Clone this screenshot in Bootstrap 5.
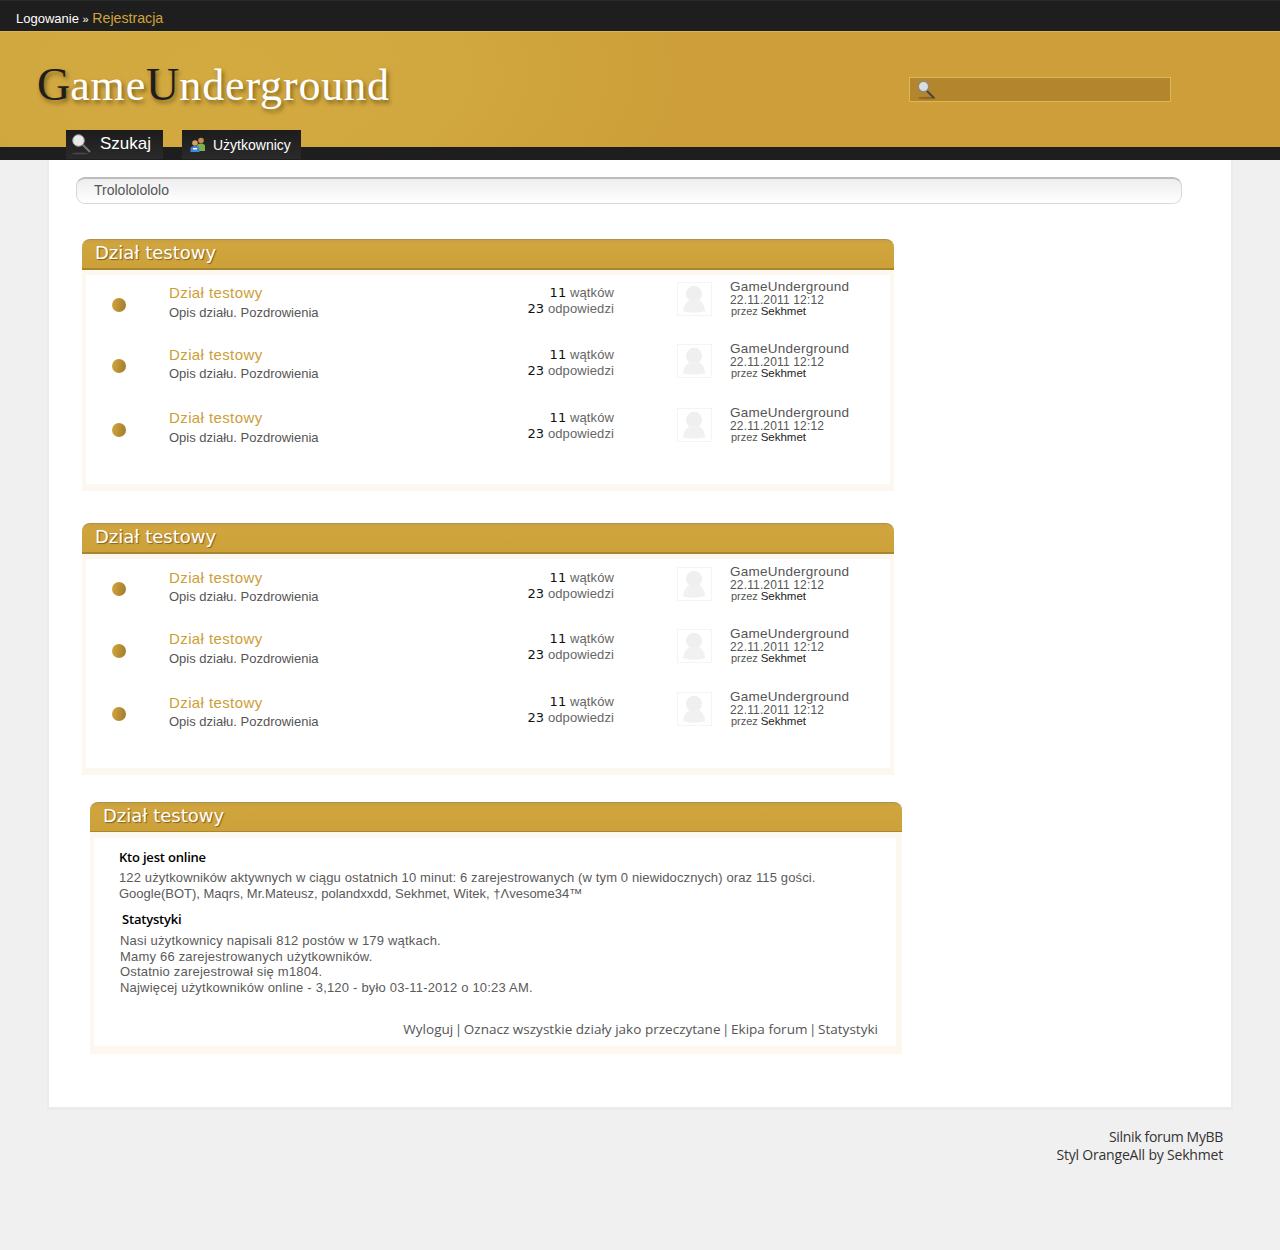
<!DOCTYPE html>
<html lang="pl">
<head>
<meta charset="utf-8">
<title>GameUnderground</title>
<link rel="stylesheet" href="https://cdn.jsdelivr.net/npm/bootstrap@5.3.0/dist/css/bootstrap.min.css">
<style>
html,body{background:#f0f0f0;}
body{font-family:"Liberation Sans",Arial,sans-serif;font-size:13px;color:#555;height:1250px;overflow:hidden;}
a{text-decoration:none;color:inherit;}
.gu-top{height:31px;background:#1e1e1e;border-top:1px solid #2a2a2a;padding:9px 0 0 16px;color:#fff;font-size:13px;line-height:17px;}
.gu-top small{font-size:11px;}
.gu-top a.gu-reg{color:#d0a33c;font-size:14.2px;}
.gu-head{height:116px;background:radial-gradient(ellipse 480px 240px at 220px 40px,#d3aa40 0%,#d1a73f 50%,#cd9e39 100%);background-color:#cc9d38;border-top:1px solid #d9b654;position:relative;}
.gu-logo{font-family:"Liberation Serif",serif;font-size:44px;line-height:52px;color:#fff;padding:27px 0 0 37px;text-shadow:2px 3px 4px rgba(60,40,0,.55);letter-spacing:.85px;}
.gu-logo b{font-weight:400;font-size:46px;letter-spacing:0;color:#1e1e1e;}
.gu-search{position:absolute;left:909px;top:45px;width:262px;height:25px;background:#b3862e;border:1px solid #dcb94c;display:flex;align-items:center;padding-left:7px;}
.gu-band{height:13px;background:#1e1e1e;position:relative;}
.gu-tabs{position:absolute;left:66px;top:-17px;display:flex;gap:19px;}
.gu-tab{height:29px;background:linear-gradient(#1c1c1c,#2a2a2a);color:#fff;display:flex;align-items:center;}
.gu-tab-a{width:97px;font-size:17px;padding-left:6px;gap:9px;padding-bottom:1px;}
.gu-tab-b{width:119px;font-size:14px;padding-left:8px;gap:7px;padding-top:1px;}
.gu-page{width:1186px;height:950px;margin-left:47px;background:#fff;border:solid #ebebeb;border-width:0 2px 3px 2px;padding:17px 0 0 27px;}
.gu-crumb{width:1106px;height:27px;border:1px solid #d8d8d8;border-top:2px solid #bdbdbd;border-radius:9px;background:linear-gradient(#eee,#fff);font-size:14px;line-height:23px;padding-left:17px;color:#555;margin-bottom:35px;}
.gu-cat{width:812px;margin-left:6px;margin-bottom:32px;}
.gu-cat-c{margin-left:14px;margin-bottom:0;margin-top:-5px;}
.gu-cat-h{height:31px;background:linear-gradient(#c9a042,#d0a53e 15%,#cda13a);border-top:1px solid #ae914f;border-bottom:2px solid #ab8430;border-radius:8px 8px 0 0;color:#fff;font-family:"DejaVu Sans",sans-serif;font-size:18px;line-height:26px;padding-left:13px;text-shadow:1px 1px 1px rgba(80,50,0,.6);}
.gu-cat-c .gu-cat-h{height:30px;border-bottom-width:1px;}
.gu-cat-b{height:221px;border:solid #fdf8ef;border-width:5px 4px 7px 4px;background:#fff;}
.gu-row{display:flex;height:62px;}
.gu-row:nth-child(2){height:63px;}
.gu-dot{width:14px;height:14px;border-radius:50%;background:linear-gradient(100deg,#d3a73f,#a17a2b);margin:23px 43px 0 26px;flex:none;}
.gu-name{width:300px;flex:none;padding-top:9px;}
.gu-name a{display:block;color:#cc9e38;font-size:15px;line-height:18px;letter-spacing:.4px;}
.gu-name p{margin:2px 0 0;line-height:18px;color:#555;}
.gu-stats{width:145px;flex:none;text-align:right;padding-top:10px;line-height:16px;color:#666;letter-spacing:.1px;}
.gu-stats b{font-weight:400;color:#111;font-family:"DejaVu Sans",sans-serif;font-size:13px;}
.gu-ava{width:35px;height:34px;flex:none;margin:7px 18px 0 63px;border:1px solid #f4f4f4;display:block;}
.gu-last{padding-top:4px;line-height:12px;font-size:12px;color:#555;}
.gu-last a{display:block;font-size:13.5px;line-height:15px;letter-spacing:.25px;}
.gu-last span{display:block;letter-spacing:.15px;}
.gu-last small{display:block;font-size:11px;padding-left:1px;line-height:11px;letter-spacing:-.05px;margin-top:-2px;}
.gu-last small a{display:inline;color:#222;font-size:11.5px;letter-spacing:0;}
.gu-a .gu-row:nth-child(2) .gu-dot{margin-top:22px;}
.gu-a .gu-row:nth-child(2) .gu-name p{margin-top:1px;}
.gu-a .gu-row:nth-child(3) .gu-ava{margin-top:8px;}
.gu-a .gu-row:nth-child(3) .gu-last{padding-top:5px;}
.gu-z .gu-ava{margin-top:8px;}
.gu-z .gu-last{padding-top:5px;}
.gu-z .gu-row:nth-child(odd) .gu-name{padding-top:10px;}
.gu-z .gu-row:nth-child(odd) .gu-name p{margin-top:1px;}
.gu-z .gu-row:nth-child(1) .gu-stats{padding-top:11px;}
.gu-info{height:222px;padding:10px 0 0 25px;border-width:6px 6px 8px 4px;font-size:13px;line-height:16px;color:#5a5a5a;}
.gu-info h6{font-family:"Open Sans",sans-serif;font-size:13px;font-weight:600;color:#000;margin:0 0 4px;line-height:18px;letter-spacing:-.2px;}
.gu-info h6.gu-h2{margin:8px 0 5px 3px;}
.gu-info p{margin:0;}
.gu-info p.gu-p2{line-height:15.6px;letter-spacing:.2px;margin-left:1px;}
.gu-w1{letter-spacing:.13px;}
.gu-links{font-family:"Open Sans",sans-serif;font-size:13.5px;color:#555;text-align:right;padding-right:18px;line-height:18px;margin-top:25px;letter-spacing:.02px;}
.gu-sep{margin:0 -2px;}
.gu-foot{width:1223px;text-align:right;font-family:"Open Sans",sans-serif;font-size:14px;line-height:18px;color:#333;padding-top:18px;letter-spacing:-.19px;}
.gu-foot span{letter-spacing:-.33px;}
</style>
</head>
<body>
<div class="gu-top"><a href="#">Logowanie</a> <small>»</small> <a href="#" class="gu-reg">Rejestracja</a></div>
<header class="gu-head">
  <div class="gu-logo"><b>G</b>ame<b>U</b>nderground</div>
  <div class="gu-search">
    <svg width="20" height="20" viewBox="0 0 20 20"><ellipse cx="10" cy="18" rx="9" ry="1.3" fill="#8e6a22"/><path d="M8 9l9 9" stroke="#444" stroke-width="2"/><circle cx="6.5" cy="6.5" r="5.2" fill="#dcdcdc" stroke="#8a8a78" stroke-width="1.4"/></svg>
  </div>
</header>
<nav class="gu-band">
  <div class="gu-tabs">
    <a href="#" class="gu-tab gu-tab-a"><svg width="19" height="21" viewBox="0 0 19 21"><ellipse cx="8" cy="19.5" rx="8" ry="1" fill="#444"/><path d="M10 10l8 8" stroke="#777" stroke-width="2"/><circle cx="6.5" cy="6.5" r="5.8" fill="#e8e8e8" stroke="#999" stroke-width="1"/></svg><span>Szukaj</span></a>
    <a href="#" class="gu-tab gu-tab-b"><svg width="16" height="16" viewBox="0 0 16 16"><circle cx="11" cy="3.5" r="2.8" fill="#c98c4a"/><path d="M7 14V9q0-2.500 4-2.500t4 2.500v5z" fill="#7fae4b"/><circle cx="5" cy="6" r="2.800" fill="#d9a066"/><path d="M.5 15v-3.500q0-2.500 4.500-2.500t4.500 2.500V15z" fill="#3f86d6"/><rect x="3" y="11" width="4" height="1.500" fill="#fff"/></svg><span>Użytkownicy</span></a>
  </div>
</nav>
<main class="gu-page">
  <div class="gu-crumb">Trolololololo</div>

  <section class="gu-cat gu-a">
    <div class="gu-cat-h">Dział testowy</div>
    <div class="gu-cat-b">
      <div class="gu-row"><i class="gu-dot"></i><div class="gu-name"><a href="#">Dział testowy</a><p>Opis działu. Pozdrowienia</p></div><div class="gu-stats"><b>11</b> wątków<br><b>23</b> odpowiedzi</div><svg class="gu-ava" viewBox="0 0 35 34"><circle cx="17" cy="11.500" r="8.500" fill="#efefef"/><path d="M5 30q2-12 12-13t12 13q-12 3-24 0z" fill="#f1f1f1"/></svg><div class="gu-last"><a href="#">GameUnderground</a><span>22.11.2011 12:12</span><small>przez <a href="#">Sekhmet</a></small></div></div>
      <div class="gu-row"><i class="gu-dot"></i><div class="gu-name"><a href="#">Dział testowy</a><p>Opis działu. Pozdrowienia</p></div><div class="gu-stats"><b>11</b> wątków<br><b>23</b> odpowiedzi</div><svg class="gu-ava" viewBox="0 0 35 34"><circle cx="17" cy="11.500" r="8.500" fill="#efefef"/><path d="M5 30q2-12 12-13t12 13q-12 3-24 0z" fill="#f1f1f1"/></svg><div class="gu-last"><a href="#">GameUnderground</a><span>22.11.2011 12:12</span><small>przez <a href="#">Sekhmet</a></small></div></div>
      <div class="gu-row"><i class="gu-dot"></i><div class="gu-name"><a href="#">Dział testowy</a><p>Opis działu. Pozdrowienia</p></div><div class="gu-stats"><b>11</b> wątków<br><b>23</b> odpowiedzi</div><svg class="gu-ava" viewBox="0 0 35 34"><circle cx="17" cy="11.500" r="8.500" fill="#efefef"/><path d="M5 30q2-12 12-13t12 13q-12 3-24 0z" fill="#f1f1f1"/></svg><div class="gu-last"><a href="#">GameUnderground</a><span>22.11.2011 12:12</span><small>przez <a href="#">Sekhmet</a></small></div></div>
    </div>
  </section>

  <section class="gu-cat gu-z">
    <div class="gu-cat-h">Dział testowy</div>
    <div class="gu-cat-b">
      <div class="gu-row"><i class="gu-dot"></i><div class="gu-name"><a href="#">Dział testowy</a><p>Opis działu. Pozdrowienia</p></div><div class="gu-stats"><b>11</b> wątków<br><b>23</b> odpowiedzi</div><svg class="gu-ava" viewBox="0 0 35 34"><circle cx="17" cy="11.500" r="8.500" fill="#efefef"/><path d="M5 30q2-12 12-13t12 13q-12 3-24 0z" fill="#f1f1f1"/></svg><div class="gu-last"><a href="#">GameUnderground</a><span>22.11.2011 12:12</span><small>przez <a href="#">Sekhmet</a></small></div></div>
      <div class="gu-row"><i class="gu-dot"></i><div class="gu-name"><a href="#">Dział testowy</a><p>Opis działu. Pozdrowienia</p></div><div class="gu-stats"><b>11</b> wątków<br><b>23</b> odpowiedzi</div><svg class="gu-ava" viewBox="0 0 35 34"><circle cx="17" cy="11.500" r="8.500" fill="#efefef"/><path d="M5 30q2-12 12-13t12 13q-12 3-24 0z" fill="#f1f1f1"/></svg><div class="gu-last"><a href="#">GameUnderground</a><span>22.11.2011 12:12</span><small>przez <a href="#">Sekhmet</a></small></div></div>
      <div class="gu-row"><i class="gu-dot"></i><div class="gu-name"><a href="#">Dział testowy</a><p>Opis działu. Pozdrowienia</p></div><div class="gu-stats"><b>11</b> wątków<br><b>23</b> odpowiedzi</div><svg class="gu-ava" viewBox="0 0 35 34"><circle cx="17" cy="11.500" r="8.500" fill="#efefef"/><path d="M5 30q2-12 12-13t12 13q-12 3-24 0z" fill="#f1f1f1"/></svg><div class="gu-last"><a href="#">GameUnderground</a><span>22.11.2011 12:12</span><small>przez <a href="#">Sekhmet</a></small></div></div>
    </div>
  </section>

  <section class="gu-cat gu-cat-c">
    <div class="gu-cat-h">Dział testowy</div>
    <div class="gu-cat-b gu-info">
      <h6>Kto jest online</h6>
      <p><span class="gu-w1">122 użytkowników aktywnych w ciągu ostatnich 10 minut: 6 zarejestrowanych (w tym 0 niewidocznych) oraz 115 gości.</span><br>Google(BOT), Maqrs, Mr.Mateusz, polandxxdd, Sekhmet, Witek, †Λvesome34™</p>
      <h6 class="gu-h2">Statystyki</h6>
      <p class="gu-p2">Nasi użytkownicy napisali 812 postów w 179 wątkach.<br>Mamy 66 zarejestrowanych użytkowników.<br>Ostatnio zarejestrował się m1804.<br>Najwięcej użytkowników online - 3,120 - było 03-11-2012 o 10:23 AM.</p>
      <div class="gu-links"><a href="#">Wyloguj</a> <span class="gu-sep">|</span> <a href="#">Oznacz wszystkie działy jako przeczytane</a> <span class="gu-sep">|</span> <a href="#">Ekipa forum</a> <span class="gu-sep">|</span> <a href="#">Statystyki</a></div>
    </div>
  </section>
</main>
<footer class="gu-foot"><span>Silnik forum MyBB</span><br>Styl OrangeAll by Sekhmet</footer>
<script src="https://cdn.jsdelivr.net/npm/bootstrap@5.3.0/dist/js/bootstrap.bundle.min.js"></script>
</body>
</html>
